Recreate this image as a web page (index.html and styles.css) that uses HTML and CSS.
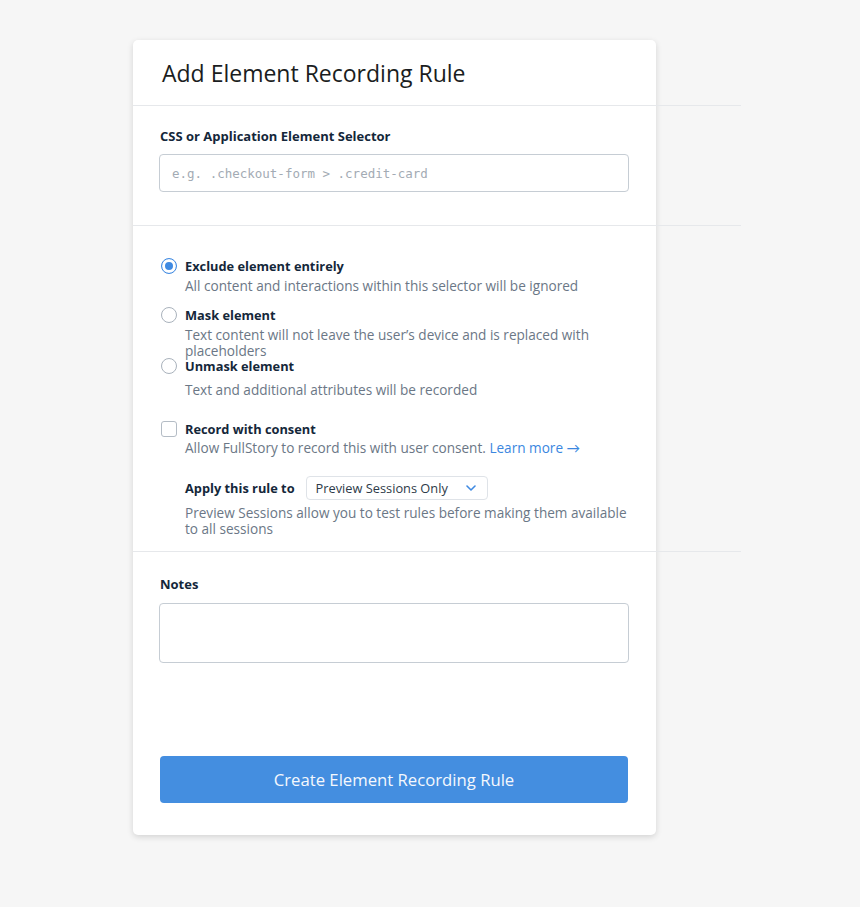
FILE: index.html
```html
<!DOCTYPE html>
<html lang="en">
<head>
  <meta charset="UTF-8">
  <title>Add Element Recording Rule</title>
  <meta name="viewport" content="width=device-width, initial-scale=1">
  <link rel="stylesheet" href="styles.css">
</head>
<body>

  <div class="page">
    <div class="card">
      <h1 class="card-title">Add Element Recording Rule</h1>
      <div class="divider"></div>

      <div class="section section-selector">
        <label class="field-label" for="selector">CSS or Application Element Selector</label>
        <input type="text" id="selector" class="text-input" placeholder="e.g. .checkout-form > .credit-card">
      </div>
      <div class="divider"></div>

      <div class="section section-options">
        <div class="option option-short">
          <span class="radio checked"></span>
          <div class="option-text">
            <div class="option-title">Exclude element entirely</div>
            <div class="option-desc">All content and interactions within this selector will be ignored</div>
          </div>
        </div>
        <div class="option option-tall">
          <span class="radio"></span>
          <div class="option-text">
            <div class="option-title">Mask element</div>
            <div class="option-desc">Text content will not leave the user’s device and is replaced with placeholders</div>
          </div>
        </div>
        <div class="option">
          <span class="radio"></span>
          <div class="option-text">
            <div class="option-title">Unmask element</div>
            <div class="option-desc option-desc-far">Text and additional attributes will be recorded</div>
          </div>
        </div>

        <div class="option option-consent">
          <span class="checkbox"></span>
          <div class="option-text">
            <div class="option-title">Record with consent</div>
            <div class="option-desc consent-desc">Allow FullStory to record this with user consent. <a class="link" href="#">Learn more →</a></div>
            <div class="apply-row">
              <span class="apply-label">Apply this rule to</span>
              <div class="select">
                <span>Preview Sessions Only</span>
                <svg width="10" height="6" viewBox="0 0 10 6"><path d="M1 1l4 4 4-4" fill="none" stroke="#3f8ae2" stroke-width="1.6" stroke-linecap="round" stroke-linejoin="round"/></svg>
              </div>
            </div>
            <div class="option-desc apply-desc">Preview Sessions allow you to test rules before making them available to all sessions</div>
          </div>
        </div>
      </div>
      <div class="divider"></div>

      <div class="section section-notes">
        <label class="field-label notes-label" for="notes">Notes</label>
        <textarea id="notes" class="text-input notes-input"></textarea>
        <button class="primary-btn">Create Element Recording Rule</button>
      </div>
    </div>
  </div>

</body>
</html>
```

FILE: styles.css
```css
body {
  margin: 0;
  background-color: #f6f6f6;
  font-family: "Open Sans", Lato, sans-serif;
  color: #14273a;
}
.page {
  padding: 40px 0 72px 133px;
}
.card {
  width: 523px;
  height: 795px;
  box-sizing: border-box;
  background: #fff;
  border-radius: 5px;
  box-shadow: 0 2px 6px rgba(0, 0, 0, 0.14);
}
.card-title {
  margin: 0;
  height: 65px;
  padding: 0 0 0 29px;
  line-height: 67px;
  font-size: 23px;
  font-weight: 400;
  color: #1a1d21;
}
.divider {
  height: 1px;
  width: 608px;
  background: #e6e8eb;
}
.section {
  padding: 0 28px 0 26px;
}
.section-selector {
  padding-top: 21px;
  padding-bottom: 33px;
}
.field-label {
  display: block;
  padding-left: 1px;
  font-size: 13px;
  font-weight: 700;
  line-height: 18px;
  margin-bottom: 9px;
}
.notes-label {
  margin-bottom: 10px;
}
.text-input {
  display: block;
  width: 470px;
  height: 38px;
  box-sizing: border-box;
  padding: 0 12px;
  border: 1px solid #c6cdd4;
  border-radius: 4px;
  font-family: "DejaVu Sans Mono", monospace;
  font-size: 12.5px;
  color: #333;
}
.text-input::placeholder {
  color: #a3abb4;
}
.section-options {
  padding-top: 30px;
  padding-left: 27px;
  padding-bottom: 14px;
}
.option {
  display: flex;
  gap: 8px;
  height: 50px;
}
.option-short {
  height: 49px;
}
.option-tall {
  height: 51px;
}
.radio,
.checkbox {
  flex: none;
  width: 16px;
  height: 16px;
  box-sizing: border-box;
  margin: 2px 0 0 1px;
  border: 1px solid #a9b2bc;
  background: #fff;
}
.radio {
  border-radius: 50%;
}
.radio.checked {
  border-color: #3f8ae2;
  box-shadow: inset 0 0 0 3px #fff, inset 0 0 0 8px #3f8ae2;
}
.checkbox {
  border-radius: 3px;
  border-color: #b4bcc5;
}
.option-title {
  font-size: 12.8px;
  font-weight: 700;
  line-height: 20px;
}
.option-desc {
  margin-top: 2px;
  font-size: 13.6px;
  line-height: 16px;
  color: #6b7786;
}
.option-desc-far {
  margin-top: 6px;
}
.consent-desc {
  margin-top: 1px;
}
.option-consent {
  height: auto;
  margin-top: 13px;
}
.link {
  color: #3b87df;
  text-decoration: none;
}
.apply-row {
  display: flex;
  align-items: center;
  gap: 11px;
  height: 24px;
  margin-top: 20px;
}
.apply-label {
  font-size: 12.8px;
  font-weight: 700;
  line-height: 20px;
}
.select {
  display: flex;
  align-items: center;
  justify-content: space-between;
  width: 182px;
  height: 24px;
  box-sizing: border-box;
  padding: 0 11px 0 9px;
  border: 1px solid #dfe3e8;
  border-radius: 4px;
  font-size: 12.8px;
  color: #2d3a48;
}
.apply-desc {
  margin-top: 5px;
}
.section-notes {
  padding-top: 23px;
}
.notes-input {
  height: 60px;
  resize: none;
  margin-bottom: 93px;
}
.primary-btn {
  display: block;
  width: 468px;
  height: 47px;
  margin-left: 1px;
  border: none;
  border-radius: 4px;
  background-color: #448ee0;
  color: #f4f8fd;
  font-family: "Open Sans", Lato, sans-serif;
  font-size: 16.7px;
  cursor: pointer;
}
```
